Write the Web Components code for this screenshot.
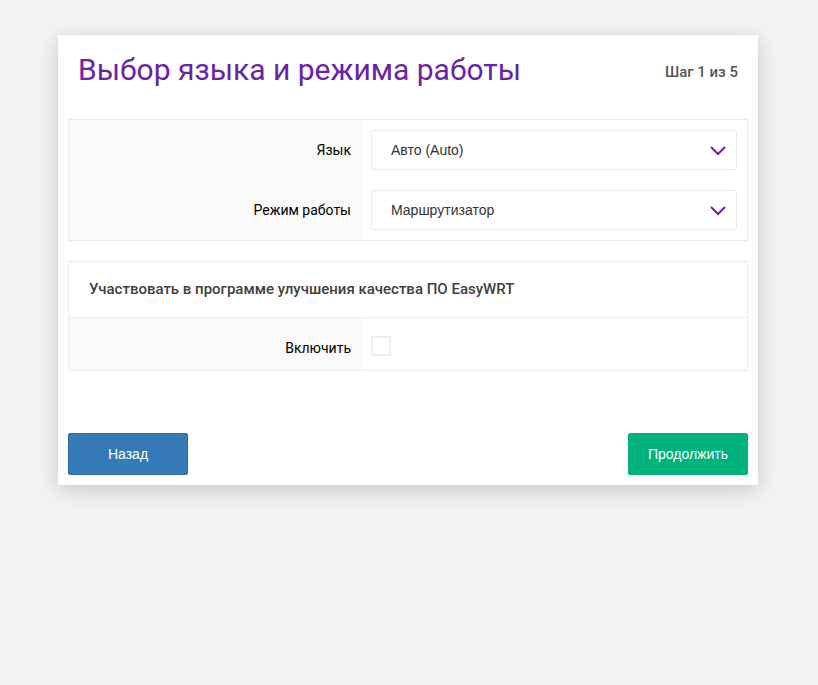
<!DOCTYPE html>
<html lang="ru">
<head>
<meta charset="utf-8">
<meta name="viewport" content="width=device-width, initial-scale=1">
<title>EasyWRT</title>
<style>
body {
  margin: 0;
  padding: 35px 2px 35px 0;
  background: #f2f3f5;
  color: #000;
  font-family: Roboto, "Liberation Sans", sans-serif;
  font-size: 14px;
  line-height: 20px;
}
</style>
</head>
<body>

<template id="wizard-template">
<style>
:host {
  display: block;
  box-sizing: border-box;
  max-width: 700px;
  margin: 0 auto;
  padding: 10px;
  background: #fff;
  box-shadow: 0 5px 20px rgba(0, 0, 0, .18), 0 0 1px rgba(0, 0, 0, .1);
}
header {
  display: flex;
  align-items: center;
  justify-content: space-between;
  gap: 20px;
  padding: 5px 10px 29px;
}
h1 {
  margin: 0;
  color: #6b23a8;
  font-size: 30px;
  font-weight: 400;
  line-height: 40px;
}
.step {
  padding-top: 4px;
  color: #555;
  font-size: 15px;
  font-weight: 500;
  white-space: nowrap;
}
.panels {
  display: grid;
  gap: 20px;
}
footer {
  display: flex;
  justify-content: space-between;
  padding-top: 62px;
}
</style>
<header>
  <h1></h1>
  <div class="step"></div>
</header>
<div class="panels"><slot></slot></div>
<footer><slot name="actions"></slot></footer>
</template>

<template id="panel-template">
<style>
:host {
  display: block;
  border: 1px solid #ededf0;
}
h2 {
  margin: 0;
  padding: 17px 20px 18px;
  border-bottom: 1px solid #ededf0;
  color: #404040;
  font-size: 15px;
  font-weight: 500;
  line-height: 20px;
}
h2[hidden] {
  display: none;
}
</style>
<h2 hidden></h2>
<slot></slot>
</template>

<template id="select-template">
<style>
:host {
  display: grid;
  grid-template-columns: 293fr 385fr;
}
label {
  padding: 20px 10px 20px 20px;
  border-right: 1px solid #f7f7f9;
  background: #fafafa;
  text-align: right;
}
.field {
  position: relative;
  padding: 10px 10px 10px 9px;
}
select {
  display: block;
  box-sizing: border-box;
  width: 100%;
  height: 40px;
  padding: 0 40px 0 19px;
  border: 1px solid #ebebf0;
  border-radius: 2px;
  background: #fff;
  color: #333;
  font: 14px/20px "Liberation Sans", Arial, sans-serif;
  appearance: none;
}
svg {
  position: absolute;
  top: 26px;
  right: 21px;
  pointer-events: none;
}
</style>
<label for="control"></label>
<div class="field">
  <select id="control"><option></option></select>
  <svg width="16" height="10" viewBox="0 0 16 10" fill="none" stroke="#6b23a8" stroke-width="2" aria-hidden="true">
    <path d="M1 1 8 8 15 1"/>
  </svg>
</div>
</template>

<template id="checkbox-template">
<style>
:host {
  display: grid;
  grid-template-columns: 293fr 385fr;
}
label {
  padding: 20px 10px 12px 20px;
  border-right: 1px solid #f7f7f9;
  background: #fafafa;
  text-align: right;
}
.field {
  padding: 18px 10px 14px 9px;
}
input {
  display: block;
  box-sizing: border-box;
  width: 20px;
  height: 20px;
  margin: 0;
  border: 2px solid #ededf4;
  background: #fff;
  appearance: none;
}
input:checked {
  background: #6b23a8;
}
</style>
<label for="control"></label>
<div class="field"><input id="control" type="checkbox"></div>
</template>

<template id="button-template">
<style>
:host {
  display: block;
}
button {
  min-width: 120px;
  height: 42px;
  padding: 0 10px;
  border: 1px solid #2e6da4;
  border-radius: 2px;
  background: #337ab7;
  color: #fff;
  font: 14px/20px "Liberation Sans", Arial, sans-serif;
  cursor: pointer;
}
:host([kind="next"]) button {
  border-color: #00b07c;
  background: #00b27d;
}
</style>
<button type="button"><slot></slot></button>
</template>

<setup-wizard heading="Выбор языка и режима работы" step="Шаг 1 из 5">
  <setup-panel>
    <select-row label="Язык" value="Авто (Auto)"></select-row>
    <select-row label="Режим работы" value="Маршрутизатор"></select-row>
  </setup-panel>
  <setup-panel heading="Участвовать в программе улучшения качества ПО EasyWRT">
    <checkbox-row label="Включить"></checkbox-row>
  </setup-panel>
  <wizard-button slot="actions">Назад</wizard-button>
  <wizard-button slot="actions" kind="next">Продолжить</wizard-button>
</setup-wizard>

<script>
class TemplateElement extends HTMLElement {
  constructor(id) {
    super()
    this.attachShadow({ mode: 'open' })
      .appendChild(document.getElementById(id).content.cloneNode(true))
  }

  setText(selector, attribute) {
    this.shadowRoot.querySelector(selector).textContent = this.getAttribute(attribute)
  }
}

class SetupWizard extends TemplateElement {
  constructor() {
    super('wizard-template')
  }

  connectedCallback() {
    this.setText('h1', 'heading')
    this.setText('.step', 'step')
  }
}

class SetupPanel extends TemplateElement {
  constructor() {
    super('panel-template')
  }

  connectedCallback() {
    if (this.hasAttribute('heading')) {
      this.setText('h2', 'heading')
      this.shadowRoot.querySelector('h2').hidden = false
    }
  }
}

class SelectRow extends TemplateElement {
  constructor() {
    super('select-template')
  }

  connectedCallback() {
    this.setText('label', 'label')
    this.setText('option', 'value')
  }
}

class CheckboxRow extends TemplateElement {
  constructor() {
    super('checkbox-template')
  }

  connectedCallback() {
    this.setText('label', 'label')
  }
}

class WizardButton extends TemplateElement {
  constructor() {
    super('button-template')
  }
}

customElements.define('setup-wizard', SetupWizard)
customElements.define('setup-panel', SetupPanel)
customElements.define('select-row', SelectRow)
customElements.define('checkbox-row', CheckboxRow)
customElements.define('wizard-button', WizardButton)
</script>
</body>
</html>
